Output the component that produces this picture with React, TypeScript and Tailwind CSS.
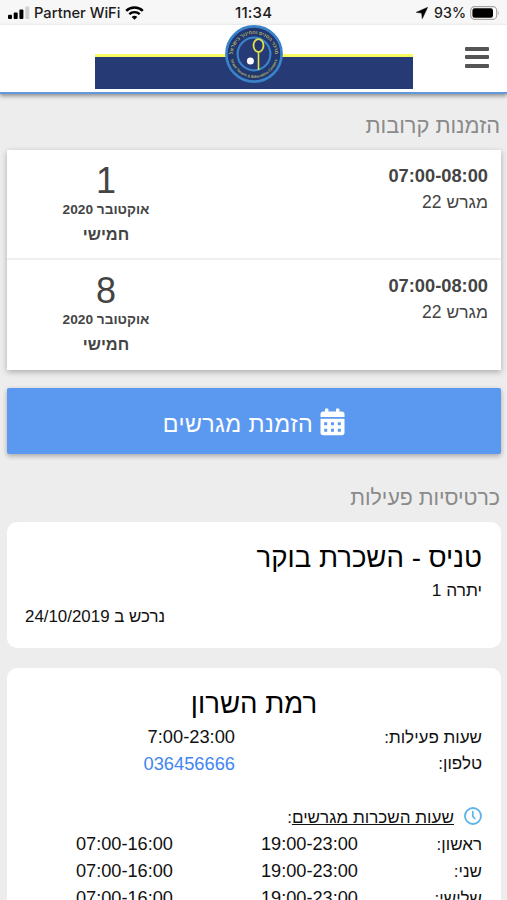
import React from "react";

const HE = "font-['Liberation_Sans',Arial,sans-serif]";

function StatusBar() {
  return (
    <div
      dir="ltr"
      className="flex h-[25px] items-center bg-[#f7f7f7] pl-2 pr-[7px] font-['Inter',sans-serif] text-[15px] font-medium leading-[25px] text-[#1c1c1c]"
    >
      <div className="flex w-[226px] items-center">
        <svg width="22" height="14" viewBox="0 0 22 14" className="mt-px">
          <rect x="0" y="8.7" width="4" height="4.3" rx="1" fill="#000" />
          <rect x="5.7" y="6.5" width="4" height="6.5" rx="1" fill="#000" />
          <rect x="11.4" y="3.6" width="4" height="9.4" rx="1" fill="#000" />
          <rect x="17.3" y="0.6" width="4" height="12.4" rx="1" fill="#d0d0d0" />
        </svg>
        <span className="ml-1 whitespace-nowrap pt-px text-[14.7px]">Partner WiFi</span>
        <svg width="19" height="14" viewBox="0 0 19 14" className="ml-[5px]" fill="none" stroke="#000">
          <path d="M1.2 4.9 C5.8 0.4 13.2 0.4 17.8 4.9" strokeWidth="2.5" />
          <path d="M4.3 8.2 C7.2 5.4 11.8 5.4 14.7 8.2" strokeWidth="2.4" />
          <path d="M9.5 13.8 L6.7 10.9 C8.3 9.4 10.7 9.4 12.3 10.9 Z" fill="#000" stroke="none" />
        </svg>
      </div>
      <span className="w-[60px] whitespace-nowrap pl-[1px] tracking-[0.2px]">11:34</span>
      <div className="ml-auto flex items-center">
        <svg width="12" height="12" viewBox="0 0 12 12">
          <path d="M11.5 0.4 L0.4 5.3 L5.7 6.1 L6.3 11.6 Z" fill="#000" stroke="#000" strokeWidth="0.6" strokeLinejoin="round" />
        </svg>
        <span className="ml-[6px] text-[14.2px]">93%</span>
        <svg width="30" height="14" viewBox="0 0 30 14" className="ml-[4px]">
          <rect x="0.7" y="0.7" width="26" height="12.6" rx="3.8" fill="#fff" stroke="#a5a5a5" strokeWidth="1.2" />
          <rect x="2.4" y="2.3" width="20.6" height="9.4" rx="2.2" fill="#000" />
          <path d="M28.2 4.7 Q29.8 7 28.2 9.3 Z" fill="#a5a5a5" />
        </svg>
      </div>
    </div>
  );
}

function Emblem() {
  return (
    <svg viewBox="0 0 60 60" className="absolute left-[129px] top-0 size-[60px]">
      <defs>
        <path id="arcTop" d="M10.3 38 A21.2 21.2 0 1 1 49.7 38" />
        <path id="arcBottom" d="M6.2 32 A24 24 0 0 0 53.8 32" />
      </defs>
      <circle cx="30" cy="29" r="27.6" fill="#22366f" stroke="#3b83c8" strokeWidth="2.6" />
      <circle cx="30" cy="29" r="16.4" fill="#263a75" stroke="#3b83c8" strokeWidth="2.2" />
      <text fill="#b3b868" fontSize="5" fontFamily="Liberation Sans" fontWeight="bold" textAnchor="middle">
        <textPath href="#arcTop" startOffset="50%">מרכזי הטניס והחינוך בישראל</textPath>
      </text>
      <text fill="#b3b868" fontSize="3.9" fontFamily="Liberation Sans" fontWeight="bold" textAnchor="middle">
        <textPath href="#arcBottom" startOffset="50%">Israel Tennis &amp; Education Centers</textPath>
      </text>
      <ellipse cx="34.5" cy="20.5" rx="5" ry="6.3" fill="#24386f" stroke="#e1e548" strokeWidth="1.8" />
      <path d="M34.5 27 V45" stroke="#e1e548" strokeWidth="1.6" />
      <circle cx="26.4" cy="36" r="3.5" fill="#fff" />
    </svg>
  );
}

function Header() {
  return (
    <header
      dir="ltr"
      className="relative flex h-[69px] items-start border-b-2 border-[#6498dc] bg-white pl-[95px] shadow-[0_2px_4px_rgba(0,0,0,0.4)]"
    >
      <div className="relative h-[64px] w-[318px] pt-[29px]">
        <div className="h-[3px] bg-[#fafa62]" />
        <div className="h-[32px] bg-[#263a75]" />
        <Emblem />
      </div>
      <div className="ml-[52px] mt-[21.5px] flex w-6 flex-col gap-[4.5px]">
        <div className="h-[4px] rounded-[1px] bg-[#555]" />
        <div className="h-[4px] rounded-[1px] bg-[#555]" />
        <div className="h-[4px] rounded-[1px] bg-[#555]" />
      </div>
    </header>
  );
}

function Booking({ day, last }: { day: string; last?: boolean }) {
  return (
    <div
      className={
        last
          ? "flex h-[110px] justify-between pl-[42px] pr-[13px] text-[#444]"
          : "flex h-[110px] justify-between border-b-2 border-[#f0f0f0] pl-[42px] pr-[13px] text-[#444]"
      }
    >
      <div className="pt-[14px]">
        <div className="text-[18.3px] font-bold leading-6" dir="ltr">07:00-08:00</div>
        <div className="text-[17.5px] leading-7">מגרש 22</div>
      </div>
      <div className="w-[114px] pt-[11px] text-center">
        <div className="text-[36px] leading-[40px]">{day}</div>
        <div className="text-[13.7px] font-bold leading-[17px]">אוקטובר 2020</div>
        <div className="mt-[4px] text-[16.4px] font-bold leading-6">חמישי</div>
      </div>
    </div>
  );
}

function CalendarIcon() {
  return (
    <svg width="25" height="28" viewBox="0 0 25 28">
      <path
        fill="#fff"
        fillRule="evenodd"
        d="M0.5 9V6.5Q0.5 3.5 3.2 3.5H5V1.2Q5 0.4 5.8 0.4H7.6Q8.4 0.4 8.4 1.2V3.5H16V1.2Q16 0.4 16.8 0.4H18.6Q19.4 0.4 19.4 1.2V3.5H21.8Q24.5 3.5 24.5 6.2V9Z M0.5 10.8H24.5V24.6Q24.5 27.3 21.8 27.3H3.2Q0.5 27.3 0.5 24.6Z M4.2 14.3V17.2H7.2V14.3Z M11 14.3V17.2H14V14.3Z M17.8 14.3V17.2H20.8V14.3Z M4.2 20.8V23.7H7.2V20.8Z M11 20.8V23.7H14V20.8Z M17.8 20.8V23.7H20.8V20.8Z"
      />
    </svg>
  );
}

const rentals = [
  { day: "ראשון:", evening: "19:00-23:00", morning: "07:00-16:00" },
  { day: "שני:", evening: "19:00-23:00", morning: "07:00-16:00" },
  { day: "שלישי:", evening: "19:00-23:00", morning: "07:00-16:00" },
];

export default function App() {
  return (
    <div dir="rtl" className={`h-[900px] w-[507px] overflow-hidden bg-[#ededed] ${HE}`}>
      <StatusBar />
      <Header />
      <main className="px-[7px] pr-[6px]">
        <h2 className="h-[56px] pr-px pt-[17px] text-[21.8px] leading-[30px] text-[#8a8a8a]">הזמנות קרובות</h2>
        <section className="h-[220px] bg-white shadow-[0_2px_6px_rgba(0,0,0,0.28)]">
          <Booking day="1" />
          <Booking day="8" last />
        </section>
        <button className="mt-[18px] flex h-[66px] w-full items-center justify-center gap-[7px] rounded-xs bg-[#5b99f0] pt-[2px] text-[23.2px] tracking-[0.4px] text-white shadow-[0_2px_5px_rgba(0,0,0,0.3)]">
          <CalendarIcon />
          <span className="pt-1">הזמנת מגרשים</span>
        </button>
        <h2 className="h-[68px] pr-px pt-[29px] text-[21.3px] leading-[30px] text-[#8a8a8a]">כרטיסיות פעילות</h2>
        <section className="h-[126px] rounded-[10px] bg-white pl-[18px] pr-[19px] pt-[18px] text-[#111]">
          <div className="text-[27.6px] leading-[36px] text-black">טניס - השכרת בוקר</div>
          <div className="pt-px text-[17.3px] leading-[27px]">יתרה 1</div>
          <div className="text-left text-[16.9px] leading-[26px]">נרכש ב 24/10/2019</div>
        </section>
        <section className="mt-5 h-[260px] rounded-t-[10px] bg-white px-[19px] pt-[17px] text-[17px] leading-[27px] text-[#111]">
          <div className="h-[38px] text-center text-[27.6px] leading-[38px] text-black">רמת השרון</div>
          <div className="flex h-[27px]">
            <span className="w-[247px] pt-px">שעות פעילות:</span>
            <span dir="ltr" className="text-[18.3px]">7:00-23:00</span>
          </div>
          <div className="flex h-[27px]">
            <span className="w-[247px]">טלפון:</span>
            <span className="text-[18.3px] text-[#4285f4]">036456666</span>
          </div>
          <div className="mt-[27px] flex h-[27px]">
            <svg width="18" height="18" viewBox="0 0 18 18" className="mt-[3px]" fill="none" stroke="#5fb6e6" strokeLinecap="round">
              <circle cx="9" cy="9" r="8" strokeWidth="1.9" />
              <path d="M8.8 4.5V9.3L10.8 11.5" strokeWidth="1.7" />
            </svg>
            <span className="mr-[10px] text-[17.1px]"><span className="underline">שעות השכרות מגרשים</span>:</span>
          </div>
          {rentals.map((r) => (
            <div key={r.day} className="flex h-[27px]">
              <span className="w-[124px]">{r.day}</span>
              <span dir="ltr" className="w-[185px] text-right text-[18.2px]">{r.evening}</span>
              <span dir="ltr" className="text-[18.2px]">{r.morning}</span>
            </div>
          ))}
        </section>
      </main>
    </div>
  );
}
